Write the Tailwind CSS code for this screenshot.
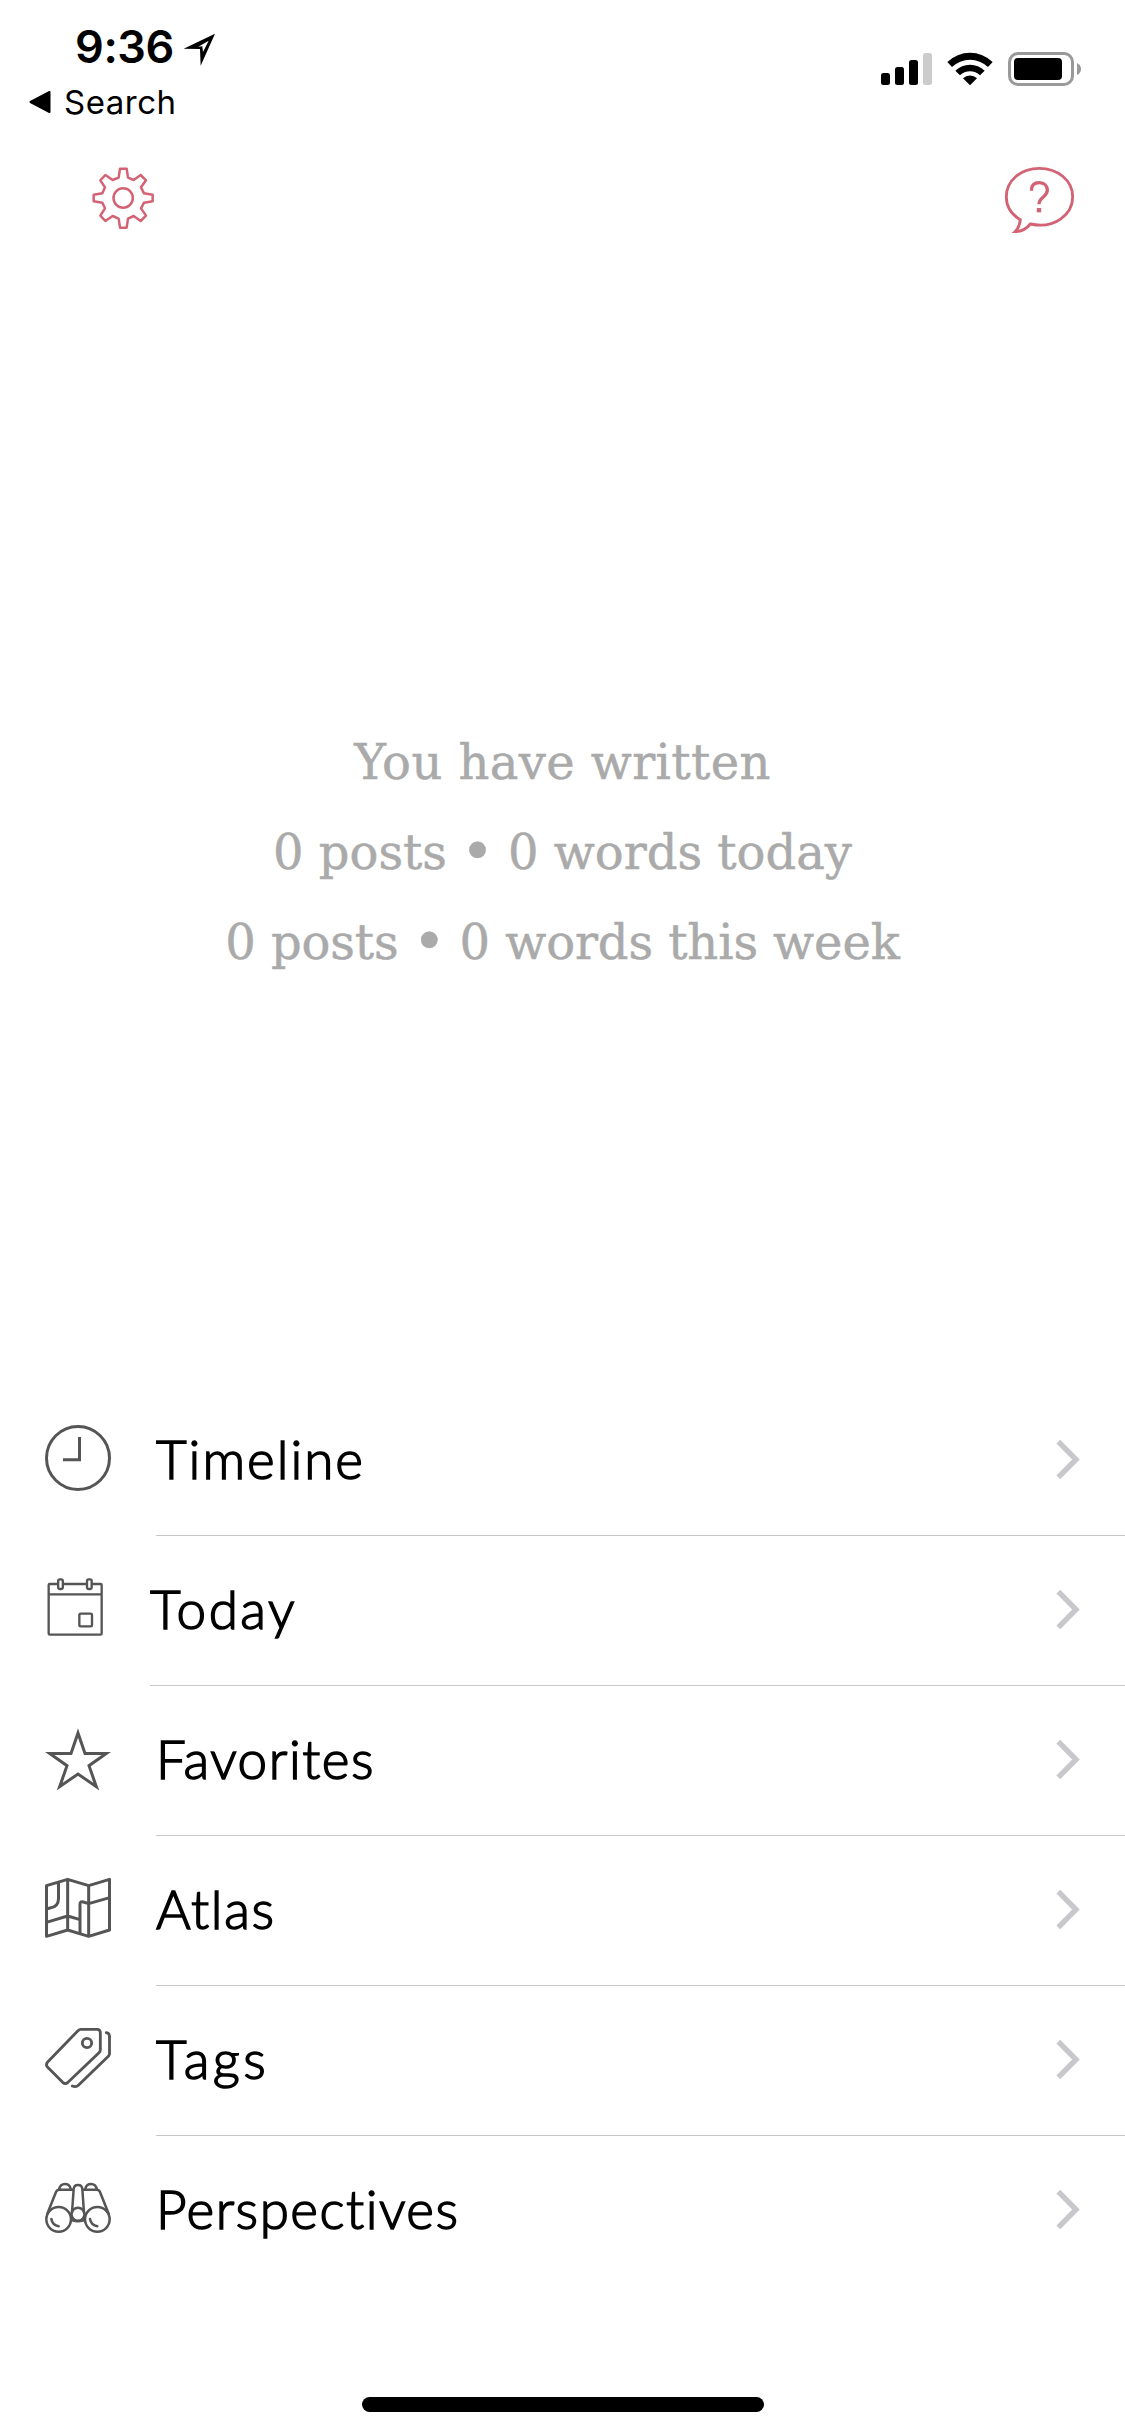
<!DOCTYPE html>
<html lang="en">
<head>
<meta charset="utf-8">
<meta name="viewport" content="width=device-width, initial-scale=1">
<title>Journal</title>
<script src="https://cdn.jsdelivr.net/npm/@tailwindcss/browser@4"></script>
</head>
<body class="bg-white">
<div class="flex h-[2436px] w-[1125px] flex-col overflow-hidden bg-white text-black">

  <!-- Status bar -->
  <header class="flex h-[135px] shrink-0 justify-between font-['Inter',sans-serif]">
    <div class="flex flex-col pt-[20px]">
      <div class="flex h-[62px] items-start pl-[75px]">
        <span class="text-[45px] leading-[54px] font-semibold tracking-[-0.4px]">9:36</span>
        <svg class="mt-[12px] ml-[9px] h-[36px] w-[36px]" viewBox="549 96 108 108">
          <path fill="#000" fill-rule="evenodd" d="M551 146 645 101 602 197 600 147ZM595 140 607 139 609 156 626 122Z"/>
        </svg>
      </div>
      <div class="flex h-[40px] items-center pl-[29px]">
        <svg class="h-[24px] w-[22px]" viewBox="0 0 22 24"><path d="M1.500 12 20.500 2V22Z" fill="#000" stroke="#000" stroke-width="2" stroke-linejoin="round"/></svg>
        <span class="ml-[13px] text-[33px] leading-[40px] tracking-[0.5px]">Search</span>
      </div>
    </div>
    <div class="flex items-start gap-[14px] pt-[52px] pr-[43px]">
      <svg class="h-[34px] w-[52px]" viewBox="0 0 52 34">
        <rect x="0" y="21" width="9" height="12" rx="2.500"/>
        <rect x="14" y="15" width="9" height="18" rx="2.500"/>
        <rect x="28" y="8" width="9" height="25" rx="2.500"/>
        <rect x="42" y="1" width="9" height="32" rx="2.500" fill="#cccccc"/>
      </svg>
      <svg class="h-[34px] w-[47px]" viewBox="261 95 141 102">
        <path d="M262 125A98 98 0 0 1 398 125L384 140A78 78 0 0 0 276 140Z"/>
        <path d="M286 151A63 63 0 0 1 374 151L360 165A43 43 0 0 0 300 165Z"/>
        <path d="M309 174A30 30 0 0 1 351 174L330 195Z"/>
      </svg>
      <svg class="h-[34px] w-[74px]" viewBox="0 0 74 34">
        <rect x="1.500" y="1.500" width="63" height="31" rx="8.500" fill="none" stroke="#999999" stroke-width="3"/>
        <rect x="6" y="6" width="48" height="22" rx="4"/>
        <path d="M69 11Q73 13 73 17T69 23Z" fill="#999999"/>
      </svg>
    </div>
  </header>

  <!-- Toolbar -->
  <nav class="flex h-[232px] shrink-0 items-start justify-between pt-[30px] pr-[50px] pl-[90px]">
    <button aria-label="Settings">
      <svg class="block h-[66px] w-[66px]" viewBox="270 495 198 198" fill="none" stroke="#d36274" stroke-width="7.500" stroke-linejoin="round">
        <path d="M356 533 360 506H380L384 533 401 540 422 525 438 541 423 562 432 580 458 584V604L432 608 423 625 438 647 422 663 401 648 384 656 380 683H360L356 656 338 648 316 663 301 647 315 625 307 608 281 604V584L307 580 315 562 301 541 316 525 338 540Z"/>
        <circle cx="369.500" cy="594" r="29"/>
      </svg>
    </button>
    <button aria-label="Help">
      <svg class="block h-[69px] w-[72px]" viewBox="429 435 216 207" fill="none" stroke="#d36274" stroke-width="8.500">
        <path d="M511 612C586 628 638 582 638 530C638 482 594 445 538 445S439 482 439 530C439 558 454 583 481 599C480 613 475 625 465 635C484 635 500 626 511 612Z"/>
        <path stroke-width="10" d="M514 512C514 496 523 488 538 488C553 488 562 498 562 511C562 532 537 530 537 553"/>
        <path stroke-width="13" d="M537 564V577"/>
      </svg>
    </button>
  </nav>

  <!-- Writing statistics -->
  <section class="flex h-[1019px] shrink-0 flex-col items-center pt-[350px] font-['DejaVu_Serif',serif] text-[48px] leading-[90px] whitespace-pre text-[#aaaaaa] [-webkit-text-stroke:0.5px_#aaaaaa]">
    <p class="tracking-[0.4px]">You have written</p>
    <p class="flex"><span>0 posts</span><span class="w-[61px] text-center text-[56px]">•</span><span>0 words today</span></p>
    <p class="flex tracking-[-0.1px]"><span>0 posts</span><span class="w-[61px] text-center text-[56px]">•</span><span>0 words this week</span></p>
  </section>

  <!-- Navigation list -->
  <ul class="flex shrink-0 flex-col pl-[45px] font-['Lato',sans-serif] text-[53px] leading-[146px] font-light">
    <li class="flex h-[150px]">
      <svg class="mr-[45px] h-[150px] w-[66px]" viewBox="135 -42 198 450" fill="none" stroke="#555555" stroke-width="9">
        <circle cx="234" cy="174" r="94.500"/><path d="M238.500 111V179H189"/>
      </svg>
      <div class="flex flex-1 justify-between border-b border-[#c8c7cc] pr-[43px]">
        <span class="tracking-[2px] [-webkit-text-stroke:1.5px_#000]">Timeline</span>
        <svg class="h-[149px] w-[27px]" viewBox="165 -42 81 447" fill="none" stroke="#c7c7cc" stroke-width="16"><path d="M175 125 228 178.500 175 232"/></svg>
      </div>
    </li>
    <li class="flex h-[150px]">
      <svg class="mr-[39px] h-[150px] w-[66px]" viewBox="135 -42 198 450" fill="none" stroke="#555555" stroke-width="7">
        <path d="M174 102H149Q146 102 146 105V250Q146 254 150 254H301Q305 254 305 250V105Q305 102 302 102H276M190 102H260M146 133H305"/>
        <rect x="174.500" y="88" width="14" height="29" rx="5"/><rect x="261" y="88" width="14" height="29" rx="5"/>
        <rect x="238" y="191" width="38" height="38" rx="4"/>
      </svg>
      <div class="flex flex-1 justify-between border-b border-[#c8c7cc] pr-[43px]">
        <span class="tracking-[2.500px] [-webkit-text-stroke:1.5px_#000]">Today</span>
        <svg class="h-[149px] w-[27px]" viewBox="165 -42 81 447" fill="none" stroke="#c7c7cc" stroke-width="16"><path d="M175 125 228 178.500 175 232"/></svg>
      </div>
    </li>
    <li class="flex h-[150px]">
      <svg class="mr-[45px] h-[150px] w-[66px]" viewBox="135 -42 198 450" fill="none" stroke="#555555" stroke-width="9" stroke-miterlimit="10">
        <path d="M234 99 255 160.500H319L267 197 289 260 234 222 179 260 201 197 149 160.500H213Z"/>
      </svg>
      <div class="flex flex-1 justify-between border-b border-[#c8c7cc] pr-[43px]">
        <span class="tracking-[1.5px] [-webkit-text-stroke:1.5px_#000]">Favorites</span>
        <svg class="h-[149px] w-[27px]" viewBox="165 -42 81 447" fill="none" stroke="#c7c7cc" stroke-width="16"><path d="M175 125 228 178.500 175 232"/></svg>
      </div>
    </li>
    <li class="flex h-[150px]">
      <svg class="mr-[45px] h-[150px] w-[66px]" viewBox="135 -42 198 450" fill="none" stroke="#555555" stroke-width="9" stroke-linejoin="round">
        <path d="M139.500 107 203 88 266 107 328.500 88V240L266 259 203 240 139.500 259ZM203 88V240M266 107V259M175.500 97V146Q175 171 150 174L139 177M139 217 203 198 240 209M240 251V163Q240 153 250 156L266 161 329 143"/>
      </svg>
      <div class="flex flex-1 justify-between border-b border-[#c8c7cc] pr-[43px]">
        <span class="tracking-[1.7px] [-webkit-text-stroke:1.5px_#000]">Atlas</span>
        <svg class="h-[149px] w-[27px]" viewBox="165 -42 81 447" fill="none" stroke="#c7c7cc" stroke-width="16"><path d="M175 125 228 178.500 175 232"/></svg>
      </div>
    </li>
    <li class="flex h-[150px]">
      <svg class="mr-[45px] h-[150px] w-[66px]" viewBox="135 -42 198 450" fill="none" stroke="#555555" stroke-width="8.500" stroke-linecap="round" stroke-linejoin="round">
        <path d="M242 88H291Q301 88 301 98V149Q301 154 297 158L204 247Q196 254 188 247L143 202Q136 194 143 186L234 92Q238 88 242 88Z"/>
        <circle cx="261" cy="129" r="14"/>
        <path d="M319 98Q328.500 99 328.500 109V161Q328.500 165 325 169L236 255Q228 263 217 258"/>
      </svg>
      <div class="flex flex-1 justify-between border-b border-[#c8c7cc] pr-[43px]">
        <span class="tracking-[3.4px] [-webkit-text-stroke:1.5px_#000]">Tags</span>
        <svg class="h-[149px] w-[27px]" viewBox="165 -42 81 447" fill="none" stroke="#c7c7cc" stroke-width="16"><path d="M175 125 228 178.500 175 232"/></svg>
      </div>
    </li>
    <li class="flex h-[150px]">
      <svg class="mr-[45px] h-[150px] w-[66px]" viewBox="135 -42 198 450" fill="none" stroke="#555555" stroke-width="7.500" stroke-linecap="round" stroke-linejoin="round">
        <circle cx="176" cy="208" r="37"/><circle cx="292" cy="208" r="37"/><circle cx="234" cy="193" r="19.500"/>
        <path d="M142 191 168 126Q171 119 177 119H216M326 191 300 126Q297 119 291 119H252M177 118Q181 102 195 102T212 116M291 118Q287 102 273 102T256 116M216 188 221 117Q222 105 234 105T247 117L252 188M217 211Q234 216 251 211"/>
        <path d="M154 207Q157 225 176 229M270 207Q273 225 292 229"/>
      </svg>
      <div class="flex flex-1 justify-between pr-[43px]">
        <span class="tracking-[1.5px] [-webkit-text-stroke:1.5px_#000]">Perspectives</span>
        <svg class="h-[150px] w-[27px]" viewBox="165 -42 81 450" fill="none" stroke="#c7c7cc" stroke-width="16"><path d="M175 125 228 178.500 175 232"/></svg>
      </div>
    </li>
  </ul>

  <!-- Home indicator -->
  <footer class="mt-auto flex justify-center pb-[24px]">
    <div class="h-[15px] w-[402px] rounded-full bg-black"></div>
  </footer>
</div>
</body>
</html>
